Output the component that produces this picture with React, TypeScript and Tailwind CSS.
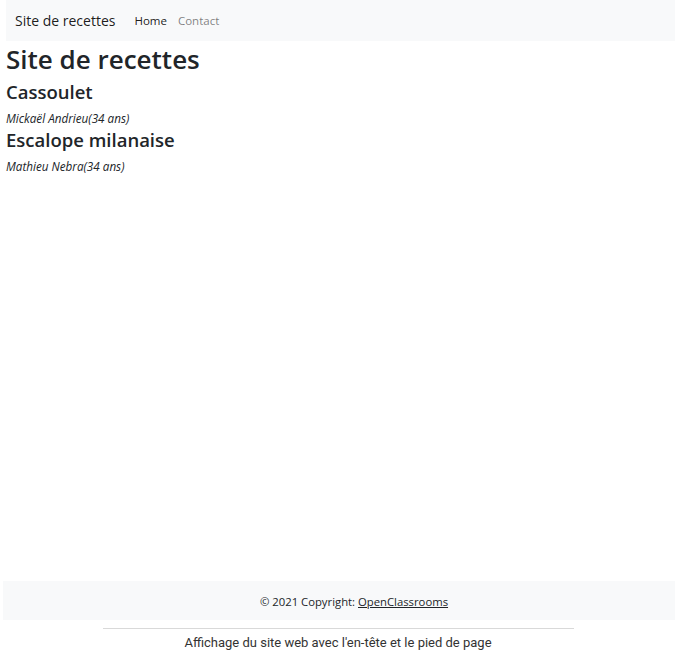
export default function App() {
  const font = { fontFamily: '"Open Sans", "Noto Sans", sans-serif' };
  return (
    <div className="w-[688px] h-[659px] bg-white flex flex-col text-[#212529]" style={font}>
      <nav className="ml-[6px] mr-[13px] h-[41px] bg-[#f8f9fa] flex items-center pl-[9px]">
        <span className="text-[14px] text-black/90 mr-[19px]">Site de recettes</span>
        <span className="text-[11.5px] text-black/90 mr-[11px] pt-[1px]">Home</span>
        <span className="text-[11.5px] text-black/50 pt-[1px]">Contact</span>
      </nav>
      <main className="h-[540px] pl-[6px]">
        <h1 className="text-[26px] font-semibold leading-[34px] mt-[1px]">Site de recettes</h1>
        <h2 className="text-[18.5px] font-semibold leading-[22px] mt-[5px]">Cassoulet</h2>
        <p className="text-[11.7px] italic leading-[22px] mt-[4px]">Mickaël Andrieu(34 ans)</p>
        <h2 className="text-[18.5px] font-semibold leading-[22px]">Escalope milanaise</h2>
        <p className="text-[11.7px] italic leading-[22px] mt-[4px]">Mathieu Nebra(34 ans)</p>
      </main>
      <footer className="ml-[3px] mr-[13px] h-[39px] bg-[#f8f9fa] flex items-center justify-center pl-[30px] pt-[3px] text-[11.3px]">
        <span>
          © 2021 Copyright: <span className="underline">OpenClassrooms</span>
        </span>
      </footer>
      <div className="ml-[103px] w-[471px] h-px bg-[#d9d9d9] mt-[8px]" />
      <div className="text-center text-[13px] text-[#333] mt-[4px] pr-[12px]" style={{ fontFamily: 'Roboto, "Liberation Sans", sans-serif' }}>
        Affichage du site web avec l'en-tête et le pied de page
      </div>
    </div>
  );
}
